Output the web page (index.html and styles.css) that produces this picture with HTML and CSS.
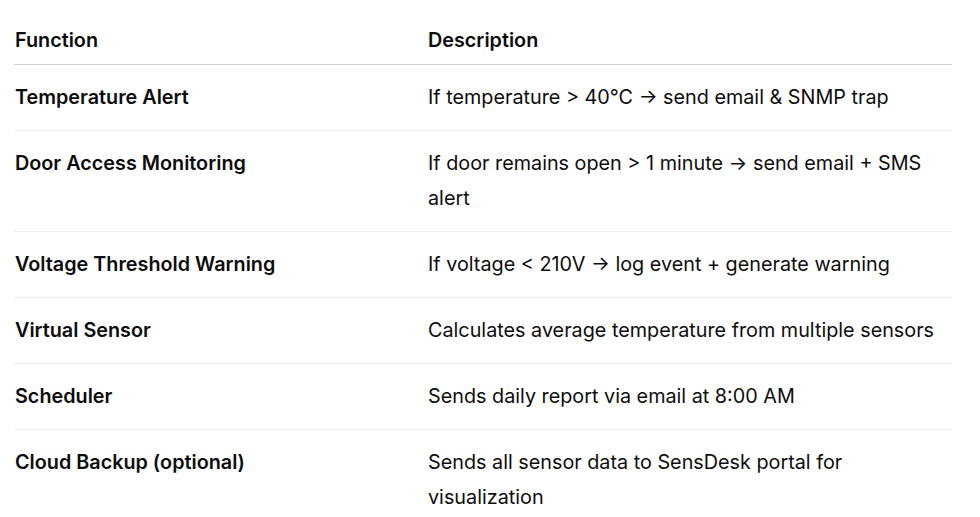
FILE: index.html
```html
<!DOCTYPE html>
<html>
<head>
<meta charset="utf-8">
<link rel="stylesheet" href="styles.css">
</head>
<body>
<div class="wrap">
<table class="fn-table">
  <colgroup><col class="c1"><col class="c2"></colgroup>
  <thead>
    <tr><th>Function</th><th>Description</th></tr>
  </thead>
  <tbody>
    <tr><td class="name">Temperature Alert</td><td>If temperature &gt; 40°C → send email &amp; SNMP trap</td></tr>
    <tr><td class="name">Door Access Monitoring</td><td>If door remains open &gt; 1 minute → send email + SMS alert</td></tr>
    <tr><td class="name">Voltage Threshold Warning</td><td>If voltage &lt; 210V → log event + generate warning</td></tr>
    <tr><td class="name">Virtual Sensor</td><td>Calculates average temperature from multiple sensors</td></tr>
    <tr><td class="name">Scheduler</td><td>Sends daily report via email at 8:00 AM</td></tr>
    <tr><td class="name">Cloud Backup (optional)</td><td>Sends all sensor data to SensDesk portal for<br>visualization</td></tr>
  </tbody>
</table>
</div>
</body>
</html>
```

FILE: styles.css
```css
html, body {
  margin: 0;
  padding: 0;
  background: #ffffff;
}
.wrap {
  padding: 16px 28px 0 14px;
}
.fn-table {
  width: 938px;
  border-collapse: collapse;
  table-layout: fixed;
  font-family: Inter, "Liberation Sans", sans-serif;
  font-size: 19.8px;
  line-height: 35px;
  color: #0d0d0d;
}
.c1 { width: 413px; }
.fn-table th {
  text-align: left;
  font-weight: 600;
  padding: 7px 0 6px 1px;
  border-bottom: 1.5px solid #d2d2d2;
}
.fn-table td {
  padding: 15px 0 15px 1px;
  vertical-align: top;
  border-bottom: 1px solid #ececec;
}
.fn-table tbody tr:last-child td {
  border-bottom: none;
}
.fn-table td.name {
  font-weight: 600;
}
```
